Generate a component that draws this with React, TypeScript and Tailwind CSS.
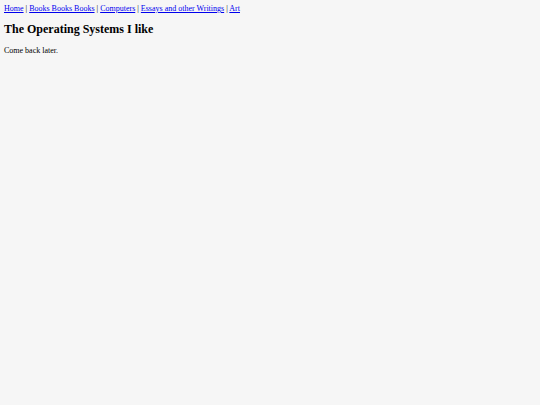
export default function App() {
  const links = ['Home', 'Books Books Books', 'Computers', 'Essays and other Writings', 'Art'];

  return (
    <div className="min-h-screen bg-[#f6f6f6] p-1 text-black" style={{ fontFamily: '"Liberation Serif", "Times New Roman", serif' }}>
      {/* nav */}
      <div className="text-[8px] leading-[1.15]">
        {links.map((l, i) => (
          <span key={l}>
            {i > 0 && ' | '}
            <a href="#" className="text-[#0000ee] underline">
              {l}
            </a>
          </span>
        ))}
      </div>

      <h1 className="mt-[10px] mb-[9px] text-[12px] leading-[1.15] font-bold">The Operating Systems I like</h1>

      <p className="text-[8px] leading-[1.15]">Come back later.</p>
    </div>
  );
}
